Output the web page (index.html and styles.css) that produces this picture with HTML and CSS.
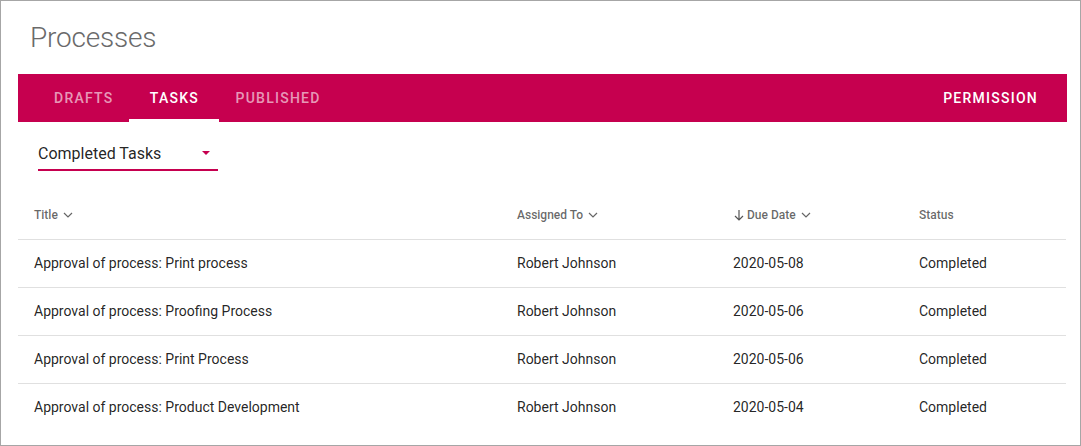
FILE: index.html
```html
<!DOCTYPE html>
<html>
<head>
<meta charset="utf-8">
<link rel="stylesheet" href="styles.css">
</head>
<body>
<div class="page">
  <h1 class="title">Processes</h1>
  <div class="bar">
    <div class="tabs">
      <div class="tab">DRAFTS</div>
      <div class="tab active">TASKS</div>
      <div class="tab">PUBLISHED</div>
    </div>
    <div class="perm">PERMISSION</div>
  </div>
  <div class="filter">
    <div class="select">
      <span>Completed Tasks</span>
      <span class="caret"></span>
    </div>
  </div>
  <div class="table">
    <div class="row head">
      <div class="c1">Title <svg class="chev" width="10" height="6" viewBox="0 0 10 6"><path d="M1 1l4 4 4-4" fill="none" stroke="#666" stroke-width="1.2"/></svg></div>
      <div class="c2">Assigned To <svg class="chev" width="10" height="6" viewBox="0 0 10 6"><path d="M1 1l4 4 4-4" fill="none" stroke="#666" stroke-width="1.2"/></svg></div>
      <div class="c3"><svg class="arrow" width="12" height="12" viewBox="0 0 12 12"><path d="M6 1v10M2 7l4 4 4-4" fill="none" stroke="#555" stroke-width="1.2"/></svg>Due Date <svg class="chev" width="10" height="6" viewBox="0 0 10 6"><path d="M1 1l4 4 4-4" fill="none" stroke="#666" stroke-width="1.2"/></svg></div>
      <div class="c4">Status</div>
    </div>
    <div class="row">
      <div class="c1">Approval of process: Print process</div>
      <div class="c2">Robert Johnson</div>
      <div class="c3">2020-05-08</div>
      <div class="c4">Completed</div>
    </div>
    <div class="row">
      <div class="c1">Approval of process: Proofing Process</div>
      <div class="c2">Robert Johnson</div>
      <div class="c3">2020-05-06</div>
      <div class="c4">Completed</div>
    </div>
    <div class="row">
      <div class="c1">Approval of process: Print Process</div>
      <div class="c2">Robert Johnson</div>
      <div class="c3">2020-05-06</div>
      <div class="c4">Completed</div>
    </div>
    <div class="row last">
      <div class="c1">Approval of process: Product Development</div>
      <div class="c2">Robert Johnson</div>
      <div class="c3">2020-05-04</div>
      <div class="c4">Completed</div>
    </div>
  </div>
</div>
</body>
</html>
```

FILE: styles.css
```css
* { box-sizing: border-box; }
html, body { margin: 0; padding: 0; }
body {
  font-family: Roboto, "Liberation Sans", sans-serif;
  color: rgba(0,0,0,0.87);
  background: #fff;
}
.page {
  width: 1081px;
  height: 446px;
  border: 1px solid #a6a6a6;
  padding: 0 13px 0 17px;
  overflow: hidden;
}
.title {
  margin: 0;
  padding: 19px 0 0 12px;
  height: 73px;
  font-family: "Roboto Light", Roboto, "Liberation Sans", sans-serif;
  font-size: 28px;
  font-weight: 300;
  line-height: 36px;
  letter-spacing: -0.2px;
  color: #6a6a6a;
}
.bar {
  height: 48px;
  background: #c6004f;
  display: flex;
  align-items: stretch;
  justify-content: space-between;
  padding: 0 29px 0 20px;
}
.tabs { display: flex; }
.tab {
  min-width: 90px;
  padding: 0 16px;
  display: flex;
  align-items: center;
  justify-content: center;
  font-size: 14px;
  font-weight: 500;
  letter-spacing: 1.25px;
  color: rgba(255,255,255,0.6);
  border-bottom: 3px solid transparent;
  padding-top: 3px;
}
.tab.active {
  color: #fff;
  border-bottom-color: #fff;
}
.perm {
  display: flex;
  align-items: center;
  font-size: 14px;
  font-weight: 500;
  letter-spacing: 1.25px;
  color: #fff;
}
.filter {
  padding: 19px 0 0 20px;
  height: 68px;
}
.select {
  width: 180px;
  height: 30px;
  border-bottom: 2px solid #c6004f;
  display: flex;
  align-items: center;
  justify-content: space-between;
  font-size: 16px;
  color: rgba(0,0,0,0.87);
  padding: 0 8px 4px 0;
}
.caret {
  width: 0;
  height: 0;
  border-left: 4px solid transparent;
  border-right: 4px solid transparent;
  border-top: 4px solid #c6004f;
}
.table { width: 1048px; }
.row {
  display: flex;
  height: 48px;
  border-bottom: 1px solid #e0e0e0;
  align-items: center;
  font-size: 14px;
  padding-bottom: 1px;
}
.row.last { border-bottom-color: transparent; }
.row.head {
  height: 50px;
  font-size: 12px;
  font-weight: 500;
  color: rgba(0,0,0,0.6);
  padding-top: 1px;
  padding-bottom: 0;
}
.row > div { padding-left: 16px; display: flex; align-items: center; }
.c1 { width: 483px; }
.c2 { width: 216px; }
.c3 { width: 186px; }
.c4 { width: 163px; }
.chev { margin-left: 5px; }
.arrow { margin-right: 2px; }
```
